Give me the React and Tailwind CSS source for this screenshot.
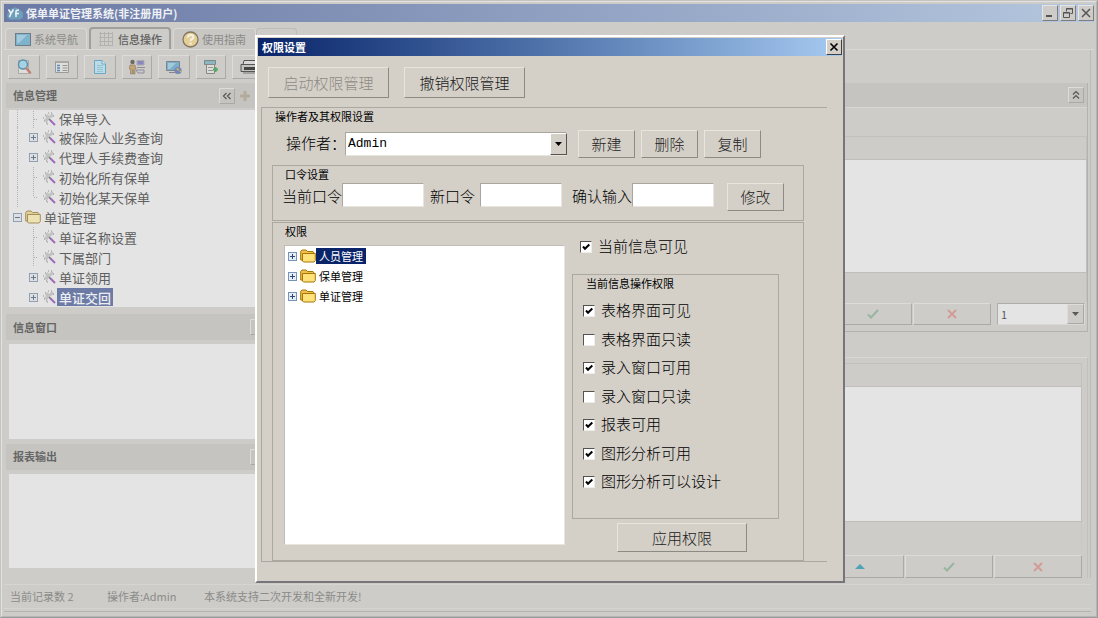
import { useState } from 'react';
import clsx from 'clsx';

const TOOLS = [
  { id: 'preview', label: '预览', width: 'w-8' },
  { id: 'list', label: '列表', width: 'w-8' },
  { id: 'document', label: '文档', width: 'w-8' },
  { id: 'operator', label: '操作者', width: 'w-[30px]' },
  { id: 'screen', label: '屏幕', width: 'w-8' },
  { id: 'import', label: '导入', width: 'w-[30px]' },
  { id: 'print', label: '打印', width: 'w-8' },
];

const NAV_ROWS = [
  { text: '保单导入', level: 1 },
  { text: '被保险人业务查询', level: 1, toggle: '+' },
  { text: '代理人手续费查询', level: 1, toggle: '+' },
  { text: '初始化所有保单', level: 1 },
  { text: '初始化某天保单', level: 1, last: true },
  { text: '单证管理', level: 0, toggle: '-' },
  { text: '单证名称设置', level: 1, child: true },
  { text: '下属部门', level: 1, child: true },
  { text: '单证领用', level: 1, toggle: '+', child: true },
  { text: '单证交回', level: 1, toggle: '+', child: true, selected: true },
];

const PERMISSION_NODES = ['人员管理', '保单管理', '单证管理'];

const PERMISSIONS = [
  { id: 'gridVisible', label: '表格界面可见', on: true },
  { id: 'gridReadonly', label: '表格界面只读', on: false },
  { id: 'entryEnabled', label: '录入窗口可用', on: true },
  { id: 'entryReadonly', label: '录入窗口只读', on: false },
  { id: 'reportEnabled', label: '报表可用', on: true },
  { id: 'chartEnabled', label: '图形分析可用', on: true },
  { id: 'chartDesign', label: '图形分析可以设计', on: true },
];

/* ---------- icons ---------- */

function LogoIcon() {
  return (
    <svg width="16" height="16" viewBox="0 0 16 16" aria-hidden="true">
      <path d="M4 14.500a3.900 3.900 0 0 1-1.500-7.500A5.600 5.600 0 0 1 13 5.500a4.600 4.600 0 0 1-.5 9z" fill="#6d9fbb" />
      <path d="M1.500 4.500l2.500 4 2.500-4M4 8.500L2.500 12" fill="none" stroke="#eef3f6" strokeWidth="1.600" />
      <path d="M9 12V6.500q0-1.500 3-1.500M8 8.500h4" fill="none" stroke="#eef3f6" strokeWidth="1.500" />
    </svg>
  );
}

function ToolIcon({ id }) {
  return (
    <svg width="16" height="16" viewBox="0 0 16 16" aria-hidden="true">
      {id === 'preview' && (
        <>
          <path d="M2.500 1.500h10v13h-10z" fill="#dededb" stroke="#a9a9a6" />
          <circle cx="7" cy="5.500" r="4.500" fill="#a5d3e4" stroke="#5d8fae" strokeWidth="1.400" />
          <path d="M10.500 9.500l3.500 4" stroke="#c08074" strokeWidth="2.600" strokeLinecap="round" />
        </>
      )}
      {id === 'list' && (
        <>
          <path d="M1.500 2.500h13v11h-13z" fill="#dededc" stroke="#9b9b99" />
          <path d="M2 3h12" stroke="#a9a9a7" strokeWidth="2" />
          <path d="M3 6.500h3M3 9h3M3 11.500h3" stroke="#5d8cb3" strokeWidth="1.600" />
          <path d="M8.500 6.500h5M8.500 9h5M8.500 11.500h5" stroke="#96948f" />
        </>
      )}
      {id === 'document' && (
        <>
          <path d="M2.500 1.500h7.500l3.500 3.500v9.500h-11z" fill="#bddbe6" stroke="#6ba9c2" />
          <path d="M10 1.500V5h3.500" fill="#e2ecf0" stroke="#6ba9c2" />
          <path d="M5 6.500h6M5 8.500h6M5 10.500h6M5 12.500h6" stroke="#93c3d6" />
        </>
      )}
      {id === 'operator' && (
        <>
          <circle cx="3.500" cy="3" r="2.200" fill="#6f6a65" />
          <path d="M1 6h5l1 4H6v5H4.500v-4h-1v4H1.500v-5H0z" fill="#c5a473" stroke="#877765" strokeWidth=".6" />
          <path d="M8 1.500h7v4.500H8z" fill="#8a88c2" stroke="#aaa" />
          <path d="M8 8.500h8M7 11h8v3H9z" fill="#c9c9ce" stroke="#8f8f9b" />
        </>
      )}
      {id === 'screen' && (
        <>
          <path d="M.5 2.500h13v9H.5z" fill="#7baec8" stroke="#7a858c" />
          <path d="M2 4h8l-6 6H2z" fill="#a2cadb" />
          <path d="M3 13.500h6" stroke="#888" />
          <circle cx="12" cy="11.500" r="3.600" fill="#7287b5" />
          <path d="M10 9.500q2-1 3 .5t-1 2zM13 13l2-2v2z" fill="#c6ae72" />
        </>
      )}
      {id === 'import' && (
        <>
          <path d="M1.500 1.500h11v4h-11z" fill="#8db5c0" stroke="#77878b" />
          <path d="M3.500 5.500h8v9h-8z" fill="#dcdcda" stroke="#898987" />
          <path d="M5 8.500h5M5 11.500h5" stroke="#969694" />
          <path d="M10 10.500h5M12.500 8v5" stroke="#58a566" strokeWidth="2" />
        </>
      )}
      {id === 'print' && (
        <>
          <path d="M4 1.500h12v4H3z" fill="#d8d8d6" stroke="#555" />
          <path d="M1 5.500h15v7H1z" fill="#c2c2c0" stroke="#555" />
          <path d="M4 9.500h12" stroke="#444" strokeWidth="3" />
          <path d="M3 14h13" stroke="#777" />
        </>
      )}
    </svg>
  );
}

function FolderIcon({ muted }) {
  return (
    <svg width="16" height="14" viewBox="0 0 16 14" aria-hidden="true">
      <path
        d="M.7 11V2.500L2 1h4l1.500 1.500H13L14 4v8z"
        fill={muted ? '#dfd098' : '#ecc24a'}
        stroke={muted ? '#a58f5d' : '#a87508'}
      />
      <path
        d="M2.500 4.500h12.800v7L14 13H3.500l-1-1z"
        fill={muted ? '#ece2b4' : '#ffe27a'}
        stroke={muted ? '#a58f5d' : '#a87508'}
      />
    </svg>
  );
}

function WandIcon() {
  return (
    <svg width="14" height="14" viewBox="0 0 14 14" aria-hidden="true">
      <path d="M3 4l3-2 1 2 3-3 2 3-3 2-2 1-2 4-3-3 2-2z" fill="#c3c3c3" />
      <path d="M3 3h1M6 1h1M9 1h1M1 6h1M2 9h1M4 11h1M11 4h1M5 12h1" stroke="#909090" />
      <path d="M7 7l2 2" stroke="#777" strokeWidth="1.700" />
      <path d="M8.500 8.500L13 13" stroke="#a069bd" strokeWidth="1.900" />
    </svg>
  );
}

function ToggleBox({ sign, muted }) {
  const stroke = muted ? '#6c7887' : '#2f4a72';
  return (
    <svg width="9" height="9" viewBox="0 0 9 9" aria-hidden="true">
      <rect x=".5" y=".5" width="8" height="8" fill={muted ? '#dcdfe4' : '#e6edf7'} stroke={muted ? '#93a0b0' : '#7893b8'} />
      <path d={sign === '+' ? 'M2 4.500h5M4.500 2v5' : 'M2 4.500h5'} stroke={stroke} />
    </svg>
  );
}

function DoubleChevron({ up }) {
  return (
    <svg width="10" height="10" viewBox="0 0 10 10" fill="none" stroke="#555" strokeWidth="1.200" aria-hidden="true">
      <path d={up ? 'M2 4.500L5 1.500l3 3M2 8.500l3-3 3 3' : 'M4.500 2L1.500 5l3 3M8.500 2l-3 3 3 3'} />
    </svg>
  );
}

function CheckGlyph() {
  return (
    <svg width="12" height="10" viewBox="0 0 12 10" aria-hidden="true">
      <path d="M1 5.500L4 8.500 11 1" fill="none" stroke="#97b59f" strokeWidth="2" />
    </svg>
  );
}

function CrossGlyph() {
  return (
    <svg width="10" height="10" viewBox="0 0 10 10" aria-hidden="true">
      <path d="M1 1l8 8M9 1L1 9" stroke="#d39c97" strokeWidth="2" />
    </svg>
  );
}

function Arrow({ color }) {
  return (
    <svg width="7" height="4" viewBox="0 0 7 4" aria-hidden="true">
      <path d="M0 0h7L3.500 4z" fill={color} />
    </svg>
  );
}

/* ---------- main window pieces ---------- */

const mutedBevel = 'border border-t-[#dddcd9] border-l-[#dddcd9] border-r-[#a9a9a7] border-b-[#a9a9a7]';

function CaptionButton({ label, children }) {
  return (
    <button
      aria-label={label}
      className="flex size-4 items-center justify-center border border-t-[#e6e6e4] border-l-[#e6e6e4] border-r-[#7d7d7d] border-b-[#7d7d7d] bg-[#cdccc8]"
    >
      {children}
    </button>
  );
}

function TitleBar() {
  return (
    <header className="flex h-[18px] items-center bg-linear-to-r from-[#6b7aa5] to-[#b5c7de] pl-[3px] text-[#eff1f5]">
      <LogoIcon />
      <h1 className="ml-[3px] flex-1 text-[11px] leading-none font-bold">保单单证管理系统(非注册用户)</h1>
      <div className="flex gap-[2px]">
        <CaptionButton label="最小化">
          <svg width="10" height="10"><path d="M1 8h6" stroke="#555" strokeWidth="2" /></svg>
        </CaptionButton>
        <CaptionButton label="还原">
          <svg width="10" height="10" fill="none" stroke="#555">
            <path d="M3.500 3.500v-3h6v5h-2M3 1h7M.5 4.500h6v5h-6zM0 5h7" />
          </svg>
        </CaptionButton>
        <CaptionButton label="关闭">
          <svg width="10" height="10"><path d="M1 1l8 8M9 1L1 9" stroke="#555" strokeWidth="1.500" /></svg>
        </CaptionButton>
      </div>
    </header>
  );
}

function Tabs() {
  return (
    <nav className="flex h-7 items-end border-b border-[#dad9d6] pl-px text-[11px] leading-none text-[#8b8b89]">
      <button className="flex h-[21px] w-[82px] items-center rounded-t-sm border border-b-0 border-[#dad9d6] bg-[#c8c7c3] pl-[9px]">
        <svg width="16" height="13" aria-hidden="true">
          <rect x=".5" y=".5" width="15" height="12" fill="#7fb2cb" stroke="#6a7d89" />
          <path d="M2 2h10L4 10H2z" fill="#a4cbdc" />
        </svg>
        <span className="ml-[3px]">系统导航</span>
      </button>
      <button className="ml-[2px] flex h-[22px] w-[82px] items-center rounded-t-sm border-2 border-b-0 border-[#9f9f9d] bg-[#cdccc8] pl-2 font-medium text-[#5f5f5f]">
        <svg width="14" height="14" stroke="#b2b2b0" aria-hidden="true">
          <path d="M0 1.500h14M0 5.500h14M0 9.500h14M0 13.500h14M1.500 0v14M5.500 0v14M9.500 0v14M13.500 0v14" />
        </svg>
        <span className="ml-[5px]">信息操作</span>
      </button>
      <button className="ml-[2px] flex h-[21px] w-[83px] items-center rounded-t-sm border border-b-0 border-[#dad9d6] bg-[#c8c7c3] pl-2">
        <svg width="17" height="17" viewBox="0 0 17 17" aria-hidden="true">
          <circle cx="8.500" cy="8.500" r="7.500" fill="#e3cf96" stroke="#84755f" strokeWidth="1.300" />
          <path d="M5.800 6.500q0-2.500 2.800-2.500t2.800 2.200q0 1.300-1.600 2-1.200.6-1.200 1.800" fill="none" stroke="#f3f0e8" strokeWidth="2" />
          <path d="M8.600 11.500v2" stroke="#f3f0e8" strokeWidth="2" />
        </svg>
        <span className="ml-[3px]">使用指南</span>
      </button>
      <button aria-label="更多" className="h-[21px] w-[41px] rounded-t-sm border border-b-0 border-[#bdbcb8]" />
    </nav>
  );
}

function PanelHeader({ title, className, children }) {
  return (
    <div className={clsx('flex items-center bg-[#c5c4c0] pl-[7px]', className)}>
      <h2 className="flex-1 text-[11px] leading-none font-bold text-[#666]">{title}</h2>
      {children}
    </div>
  );
}

function NavRow({ row }) {
  return (
    <li className={clsx('flex h-5 shrink-0 items-center first:h-[17px]', row.level === 0 ? 'pl-1' : 'pl-2')}>
      {row.level === 1 && (
        <span
          className={clsx('w-3 self-stretch border-dotted border-[#b5b5b5]', row.child ? 'border-l-0' : 'border-l')}
        />
      )}
      {row.toggle ? (
        <ToggleBox sign={row.toggle} muted />
      ) : (
        <svg width="9" height="20" stroke="#b0b0b0" strokeDasharray="1 1" aria-hidden="true">
          <path d={row.last ? 'M4.500 0v10M5 10.500h4' : 'M4.500 0v20M5 10.500h4'} />
        </svg>
      )}
      {row.level === 0 ? (
        <span className="ml-[3px]"><FolderIcon muted /></span>
      ) : (
        <span className="ml-1"><WandIcon /></span>
      )}
      <span
        className={clsx(
          'ml-px flex items-center px-[2px] text-[13px] leading-none whitespace-nowrap',
          row.selected ? 'h-[18px] bg-[#6c7ba5] font-medium text-[#eceef2]' : 'text-[#5f5f5f]'
        )}
      >
        {row.text}
      </span>
    </li>
  );
}

function Sidebar() {
  return (
    <aside className="flex w-[270px] flex-col pb-[10px] pl-[2px]">
      <div className="flex gap-[6px] pt-[5px] pl-[2px]">
        {TOOLS.map((tool) => (
          <button
            key={tool.id}
            aria-label={tool.label}
            className={clsx('flex h-6 shrink-0 items-center justify-center', tool.width, mutedBevel)}
          >
            <ToolIcon id={tool.id} />
          </button>
        ))}
      </div>

      <PanelHeader title="信息管理" className="mt-1 h-[25px] pr-[23px]">
        <button aria-label="收起" className={clsx('flex size-4 items-center justify-center', mutedBevel)}>
          <DoubleChevron />
        </button>
        <svg width="12" height="12" className="ml-1" aria-hidden="true">
          <path d="M6 1v10M1 6h10" stroke="#b3ab9c" strokeWidth="3" />
        </svg>
      </PanelHeader>
      <ul className="mt-[2px] ml-[3px] flex flex-col overflow-hidden bg-[#e4e4e4]">
        {NAV_ROWS.map((row) => (
          <NavRow key={row.text} row={row} />
        ))}
      </ul>

      <PanelHeader title="信息窗口" className="mt-[7px] h-[26px]">
        <button aria-label="收起信息窗口" className={clsx('mr-2 size-4', mutedBevel)} />
      </PanelHeader>
      <div className="mt-1 ml-[3px] min-h-[94px] flex-1 bg-[#e4e4e4]" />

      <PanelHeader title="报表输出" className="mt-[5px] h-[26px]">
        <button aria-label="收起报表输出" className={clsx('mr-2 size-4', mutedBevel)} />
      </PanelHeader>
      <div className="mt-1 ml-[3px] min-h-[94px] flex-1 bg-[#e4e4e4]" />
    </aside>
  );
}

function RecordArea() {
  return (
    <main className="flex flex-1 flex-col border-r border-[#bbbab7] pt-[33px] pr-[2px]">
      <section className="border-r border-b border-[#b3b2af]">
        <PanelHeader title="" className="h-[25px] border-b border-[#d6d5d2] pr-[3px]">
          <button aria-label="折叠" className={clsx('flex size-4 items-center justify-center', mutedBevel)}>
            <DoubleChevron up />
          </button>
        </PanelHeader>
        <div className="mt-7 h-[23px] border-t border-r border-[#c2c1be]" />
        <div className="h-[114px] border-y border-r border-[#bfbebb] bg-[#e4e4e4]" />
        <div className="h-[28px] border-r border-[#c2c1be]" />
        <div className="mt-[2px] flex justify-end pr-[2px] pb-[6px]">
          <button aria-label="保存记录" className={clsx('flex h-[22px] w-[78px] items-center justify-center', mutedBevel)}>
            <CheckGlyph />
          </button>
          <button aria-label="取消记录" className={clsx('ml-px flex h-[22px] w-[78px] items-center justify-center', mutedBevel)}>
            <CrossGlyph />
          </button>
          <div className="relative ml-[6px] h-[22px] w-[88px]">
            <select
              aria-label="页码"
              className="block size-full appearance-none border border-t-[#adadab] border-l-[#adadab] border-r-[#dad9d6] border-b-[#dad9d6] bg-[#e4e4e4] pl-[3px] text-[11px] text-[#5a5a5a]"
            >
              <option>1</option>
            </select>
            <span className={clsx('pointer-events-none absolute inset-y-px right-px flex w-[17px] items-center justify-center bg-[#cdccc8]', mutedBevel)}>
              <Arrow color="#5a5a5a" />
            </span>
          </div>
        </div>
      </section>

      <section className="mt-[25px] flex flex-1 flex-col border-t border-r border-t-[#d8d7d4] border-r-[#c2c1be] pt-[5px] pr-[5px]">
        <div className="h-[23px] border-t border-r border-[#c2c1be]" />
        <div className="min-h-[135px] flex-1 border-y border-r border-[#bfbebb] bg-[#e4e4e4]" />
        <div className="h-[28px] border-r border-[#c8c7c3]" />
        <div className="mt-[5px] flex justify-end gap-px">
          <button aria-label="上移" className={clsx('flex h-[23px] w-[88px] items-center justify-center', mutedBevel)}>
            <svg width="10" height="5" aria-hidden="true"><path d="M0 5l5-5 5 5z" fill="#4ea3b5" /></svg>
          </button>
          <button aria-label="保存" className={clsx('flex h-[23px] w-[88px] items-center justify-center', mutedBevel)}>
            <CheckGlyph />
          </button>
          <button aria-label="取消" className={clsx('flex h-[23px] w-[88px] items-center justify-center', mutedBevel)}>
            <CrossGlyph />
          </button>
        </div>
      </section>
    </main>
  );
}

/* ---------- dialog pieces ---------- */

function DialogButton({ className, disabled, children }) {
  return (
    <button
      disabled={disabled}
      className={clsx(
        'border border-t-[#e8e5df] border-l-[#e8e5df] border-r-[#8c8a84] border-b-[#8c8a84] bg-[#d4d0c8] pb-px text-[15px] leading-none font-light',
        disabled ? 'text-[#8d8a84]' : 'text-[#222]',
        className
      )}
    >
      {children}
    </button>
  );
}

function PasswordField({ id, label, labelWidth }) {
  return (
    <>
      <label htmlFor={id} className={clsx('flex h-6 items-center', labelWidth)}>{label}</label>
      <input
        id={id}
        type="password"
        className="h-6 w-[82px] border border-t-[#a9a69f] border-l-[#a9a69f] border-r-[#e8e5df] border-b-[#e8e5df] bg-white px-1"
      />
    </>
  );
}

function Check({ label, checked, onChange, className }) {
  return (
    <label className={clsx('flex items-center gap-[6px] text-[15px] leading-none font-light', className)}>
      <span className="grid">
        <input
          type="checkbox"
          checked={checked}
          onChange={onChange}
          className="col-start-1 row-start-1 size-3 appearance-none border border-t-[#55534f] border-l-[#55534f] border-r-[#efede9] border-b-[#efede9] bg-white"
        />
        {checked && (
          <svg width="12" height="12" className="pointer-events-none col-start-1 row-start-1" aria-hidden="true">
            <path d="M3 5.500L5 7.800 9.300 3.500" fill="none" stroke="#000" strokeWidth="2" />
          </svg>
        )}
      </span>
      <span className="pb-[3px]">{label}</span>
    </label>
  );
}

function PermissionDialog() {
  const [selected, setSelected] = useState('人员管理');
  const [visible, setVisible] = useState(true);
  const [granted, setGranted] = useState(
    Object.fromEntries(PERMISSIONS.map((item) => [item.id, item.on]))
  );

  const toggle = (id) => setGranted((prev) => ({ ...prev, [id]: !prev[id] }));

  return (
    <div
      role="dialog"
      aria-labelledby="dialog-title"
      className="w-[590px] border-2 border-t-white border-l-white border-r-[#77757a] border-b-[#77757a] bg-[#d4d0c8] p-px text-black"
    >
      <div className="flex h-[18px] items-center bg-linear-to-r from-[#0a246a] to-[#a6caf0] pl-1">
        <h2 id="dialog-title" className="flex-1 text-[11px] leading-none font-bold text-white">权限设置</h2>
        <button
          aria-label="关闭"
          className="flex size-4 items-center justify-center border border-t-white border-l-white border-r-[#404040] border-b-[#404040] bg-[#d4d0c8]"
        >
          <svg width="10" height="10"><path d="M1.500 1.500l7 7M8.500 1.500l-7 7" stroke="#000" strokeWidth="1.600" /></svg>
        </button>
      </div>

      <div className="flex gap-[15px] pt-[11px] pl-[10px]">
        <DialogButton disabled className="h-[31px] w-[121px]">启动权限管理</DialogButton>
        <DialogButton className="h-[31px] w-[121px]">撤销权限管理</DialogButton>
      </div>

      <section className="mt-[9px] mr-[15px] mb-[18px] ml-[3px] border-y border-l border-[#aaa8a1]">
        <h3 className="flex h-4 items-center pl-[13px] text-[11px] leading-none">操作者及其权限设置</h3>
        <div className="flex items-center pt-[6px] pl-6 text-[15px] leading-none font-light">
          <label htmlFor="operator" className="w-[59px] pb-[3px] whitespace-nowrap">操作者：</label>
          <div className="relative mr-[11px] h-6 w-[222px]">
            <select
              id="operator"
              className="block size-full appearance-none border border-t-[#a9a69f] border-l-[#a9a69f] border-r-[#e8e5df] border-b-[#e8e5df] bg-white pb-[2px] pl-[2px] font-['Liberation_Mono',monospace] text-[13px] font-normal"
            >
              <option>Admin</option>
            </select>
            <span className="pointer-events-none absolute inset-y-px right-0 flex w-[17px] items-center justify-center border border-t-white border-l-white border-r-[#55534f] border-b-[#55534f] bg-[#d4d0c8]">
              <Arrow color="#000" />
            </span>
          </div>
          <div className="flex gap-[6px]">
            <DialogButton className="h-7 w-[57px]">新建</DialogButton>
            <DialogButton className="h-7 w-[57px]">删除</DialogButton>
            <DialogButton className="h-7 w-[57px]">复制</DialogButton>
          </div>
        </div>

        <section className="mt-[7px] mr-[23px] ml-[10px] border border-[#aaa8a1] pb-[9px]">
          <h3 className="flex h-4 items-center pl-3 text-[11px] leading-none">口令设置</h3>
          <div className="flex pt-px pl-[9px] text-[15px] leading-none font-light">
            <PasswordField id="current-password" label="当前口令" labelWidth="w-[60px]" />
            <div className="w-[6px]" />
            <PasswordField id="new-password" label="新口令" labelWidth="w-[50px]" />
            <div className="w-[10px]" />
            <PasswordField id="confirm-password" label="确认输入" labelWidth="w-[60px]" />
            <DialogButton className="ml-[13px] h-7 w-[57px]">修改</DialogButton>
          </div>
        </section>

        <section className="mt-px mr-[23px] ml-[10px] border border-[#aaa8a1] pb-2">
          <h3 className="flex h-4 items-center pl-3 text-[11px] leading-none">权限</h3>
          <div className="flex items-start pl-[11px]">
            <ul className="mt-[6px] h-[300px] w-[281px] border border-t-[#c0bdb6] border-l-[#c0bdb6] border-r-[#e8e5df] border-b-[#e8e5df] bg-white">
              {PERMISSION_NODES.map((name) => (
                <li key={name} className="flex h-5 items-center pl-[3px]">
                  <ToggleBox sign="+" />
                  <span className="ml-[3px]"><FolderIcon /></span>
                  <button
                    onClick={() => setSelected(name)}
                    className={clsx(
                      'flex h-4 items-center px-[3px] text-[11px] leading-none',
                      selected === name && 'bg-[#0a246a] text-white'
                    )}
                  >
                    {name}
                  </button>
                </li>
              ))}
            </ul>

            <div className="ml-[7px] w-[207px]">
              <Check
                label="当前信息可见"
                checked={visible}
                onChange={() => setVisible(!visible)}
                className="h-4 pl-2"
              />
              <section className="mt-[19px] border border-[#aaa8a1] pb-[26px]">
                <h3 className="flex h-4 items-center pl-[13px] text-[11px] leading-none">当前信息操作权限</h3>
                <div className="mt-[10px] flex h-[191px] flex-col justify-between pl-[10px]">
                  {PERMISSIONS.map((item) => (
                    <Check
                      key={item.id}
                      label={item.label}
                      checked={granted[item.id]}
                      onChange={() => toggle(item.id)}
                      className="h-5"
                    />
                  ))}
                </div>
              </section>
              <DialogButton className="mt-1 ml-[45px] block h-[29px] w-[130px]">应用权限</DialogButton>
            </div>
          </div>
        </section>
      </section>
    </div>
  );
}

export default function App() {
  return (
    <div className="relative flex min-h-screen flex-col border border-t-[#c4c3c0] border-l-[#c4c3c0] border-r-[#9b9b9b] border-b-[#9b9b9b] bg-[#cdccc8] font-['Noto_Sans_CJK_SC',sans-serif]">
      <div className="flex flex-1 flex-col border border-t-[#e2e2e0] border-l-[#e2e2e0] border-r-[#b5b4b0] border-b-[#b5b4b0] p-[2px]">
        <TitleBar />
        <Tabs />
        <div className="flex flex-1 pr-[3px]">
          <Sidebar />
          <RecordArea />
        </div>
        <footer className="mt-[6px] mr-[3px] mb-[2px] border-b border-[#b5b4b0] pb-[2px]">
          <div className="flex h-[25px] items-center border-y border-[#d6d5d2] pl-[6px] text-[11px] leading-none text-[#8b8b89]">
            <span className="w-[97px]">当前记录数 2</span>
            <span className="w-[97px]">操作者:Admin</span>
            <span>本系统支持二次开发和全新开发!</span>
          </div>
        </footer>
      </div>

      <div className="absolute inset-0 flex items-center justify-center pl-[2px]">
        <PermissionDialog />
      </div>
    </div>
  );
}
